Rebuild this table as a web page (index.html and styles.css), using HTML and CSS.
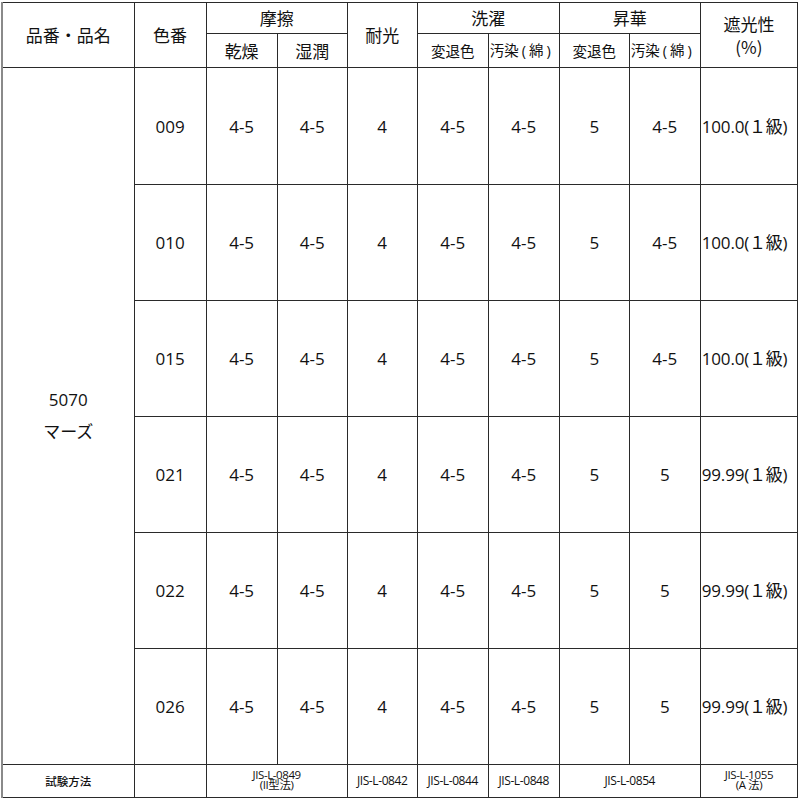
FILE: index.html
```html
<!DOCTYPE html>
<html lang="ja">
<head>
<meta charset="utf-8">
<title>試験結果</title>
<link rel="stylesheet" href="styles.css">
</head>
<body>
<table class="spec">
  <colgroup>
    <col class="c-name"><col class="c-color"><col class="c-72"><col class="c-70"><col class="c-70"><col class="c-71"><col class="c-71"><col class="c-70"><col class="c-72"><col class="c-shade">
  </colgroup>
  <thead>
    <tr class="h1">
      <th rowspan="2" class="big">品番・品名</th>
      <th rowspan="2" class="big">色番</th>
      <th colspan="2" class="big">摩擦</th>
      <th rowspan="2" class="big">耐光</th>
      <th colspan="2" class="big">洗濯</th>
      <th colspan="2" class="big">昇華</th>
      <th rowspan="2" class="big shade-h">遮光性<br>(%)</th>
    </tr>
    <tr class="h2">
      <th class="big">乾燥</th>
      <th class="big">湿潤</th>
      <th class="small">変退色</th>
      <th class="small">汚染<span class="p">(</span>綿<span class="p">)</span></th>
      <th class="small">変退色</th>
      <th class="small">汚染<span class="p">(</span>綿<span class="p">)</span></th>
    </tr>
  </thead>
  <tbody>
    <tr class="row first">
      <td rowspan="6" class="name">5070<br>マーズ</td>
      <td>009</td><td>4-5</td><td>4-5</td><td>4</td><td>4-5</td><td>4-5</td><td>5</td><td>4-5</td><td class="shade">100.0(１級)</td>
    </tr>
    <tr class="row">
      <td>010</td><td>4-5</td><td>4-5</td><td>4</td><td>4-5</td><td>4-5</td><td>5</td><td>4-5</td><td class="shade">100.0(１級)</td>
    </tr>
    <tr class="row">
      <td>015</td><td>4-5</td><td>4-5</td><td>4</td><td>4-5</td><td>4-5</td><td>5</td><td>4-5</td><td class="shade">100.0(１級)</td>
    </tr>
    <tr class="row">
      <td>021</td><td>4-5</td><td>4-5</td><td>4</td><td>4-5</td><td>4-5</td><td>5</td><td>5</td><td class="shade">99.99(１級)</td>
    </tr>
    <tr class="row">
      <td>022</td><td>4-5</td><td>4-5</td><td>4</td><td>4-5</td><td>4-5</td><td>5</td><td>5</td><td class="shade">99.99(１級)</td>
    </tr>
    <tr class="row">
      <td>026</td><td>4-5</td><td>4-5</td><td>4</td><td>4-5</td><td>4-5</td><td>5</td><td>5</td><td class="shade">99.99(１級)</td>
    </tr>
  </tbody>
  <tfoot>
    <tr class="foot">
      <td class="method">試験方法</td>
      <td></td>
      <td colspan="2" class="two">JIS-L-0849<br>(II型法)</td>
      <td>JIS-L-0842</td>
      <td>JIS-L-0844</td>
      <td>JIS-L-0848</td>
      <td colspan="2">JIS-L-0854</td>
      <td class="two">JIS-L-1055<br>(A 法)</td>
    </tr>
  </tfoot>
</table>
</body>
</html>
```

FILE: styles.css
```css
html, body {
  margin: 0;
  padding: 0;
  background: #fff;
}

body {
  font-family: "Open Sans", "Noto Sans CJK JP", sans-serif;
  color: #111;
}

.spec {
  margin: 2px 0 0 1px;
  width: 797px;
  table-layout: fixed;
  border-collapse: collapse;
  border-left: 2px solid #8a8a8a;
  border-top: 1px solid #222;
  border-right: 1px solid #333;
  border-bottom: 1px solid #333;
}

.c-name { width: 132px; }
.c-color { width: 72px; }
.c-72 { width: 71px; }
.c-70 { width: 70px; }
.c-71 { width: 71px; }
.c-shade { width: 97px; }

.spec th,
.spec td {
  border: 1px solid #2a2a2a;
  padding: 0;
  text-align: center;
  vertical-align: middle;
  font-weight: normal;
  white-space: nowrap;
  overflow: visible;
}

.h1 { height: 31px; }
.h2 { height: 34px; }
.row { height: 116px; }
.row.first { height: 117px; }
.foot { height: 33px; }

.big {
  font-family: "Noto Sans CJK JP", sans-serif;
  font-size: 17px;
  line-height: 22px;
}

.small {
  font-family: "Noto Sans CJK JP", sans-serif;
  font-size: 14.5px;
  line-height: 20px;
}

.small .p {
  font-family: "Open Sans", sans-serif;
  margin: 0 3px;
}

.h2 .small:nth-child(4),
.h2 .small:nth-child(6) {
  text-align: left;
  padding-left: 1px;
}

.shade-h {
  line-height: 23px;
  padding-bottom: 2px;
}

.row td {
  font-size: 17px;
  line-height: 24px;
  padding-top: 1px;
}

.row td.name {
  line-height: 32px;
  padding-top: 0;
}

.row td.shade {
  text-align: left;
  padding-left: 1px;
  letter-spacing: -0.2px;
}

.foot td {
  font-size: 12px;
  line-height: 14px;
  letter-spacing: -0.4px;
}

.foot td.two {
  font-size: 11.5px;
  line-height: 10px;
  padding-bottom: 3px;
}

.foot td.method {
  font-family: "Noto Sans CJK JP", sans-serif;
  font-weight: 500;
  font-size: 11.5px;
  letter-spacing: 0;
}
```
